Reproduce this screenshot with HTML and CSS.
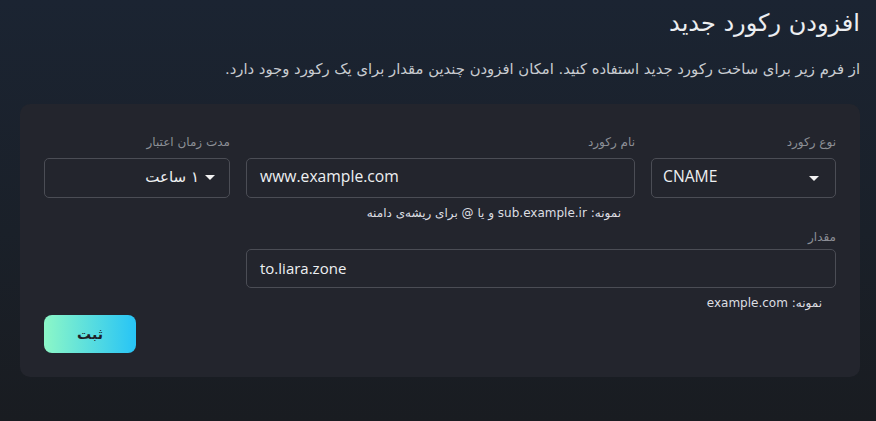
FILE: index.html
```html
<!DOCTYPE html>
<html lang="fa" dir="rtl">
<head>
<meta charset="utf-8">
<link rel="stylesheet" href="styles.css">
</head>
<body>
<div class="page">
  <h1 class="title">افزودن رکورد جدید</h1>
  <p class="subtitle">از فرم زیر برای ساخت رکورد جدید استفاده کنید. امکان افزودن چندین مقدار برای یک رکورد وجود دارد.</p>
  <div class="card">
    <div class="grid">
      <div class="field">
        <div class="label">نوع رکورد</div>
        <div class="box select-ltr" dir="ltr">
          <span class="val">CNAME</span>
          <span class="caret"></span>
        </div>
      </div>
      <div class="field">
        <div class="label">نام رکورد</div>
        <div class="box" dir="ltr"><span class="val">www.example.com</span></div>
        <div class="hint">نمونه: sub.example.ir و یا @ برای ریشه‌ی دامنه</div>
      </div>
      <div class="field">
        <div class="label">مدت زمان اعتبار</div>
        <div class="box select-rtl">
          <span class="caret"></span>
          <span class="val">۱ ساعت</span>
        </div>
      </div>
      <div class="field span2">
        <div class="label label-tight">مقدار</div>
        <div class="box box-value" dir="ltr"><span class="val">to.liara.zone</span></div>
        <div class="hint">نمونه: example.com</div>
      </div>
    </div>
    <div class="actions">
      <button class="submit" type="button">ثبت</button>
    </div>
  </div>
</div>
</body>
</html>
```

FILE: styles.css
```css
html, body {
  margin: 0;
  height: 100%;
}
body {
  background: linear-gradient(180deg, #1b2432 0%, #1a2029 55%, #191c21 100%);
  font-family: "Open Sans", "DejaVu Sans", sans-serif;
  color: #e6e8eb;
}
.page {
  padding: 4px 16px 0 16px;
}
.title {
  margin: 0;
  font-family: "DejaVu Sans", sans-serif;
  font-weight: 400;
  font-size: 24px;
  line-height: 38px;
  color: #eceef1;
}
.subtitle {
  margin: 16px 0 0 0;
  font-family: "DejaVu Sans", sans-serif;
  font-size: 14.8px;
  line-height: 22px;
  color: #c9ccd1;
}
.card {
  margin: 24px 0 0 4px;
  background: #23252d;
  border-radius: 10px;
  padding: 30px 24px 24px 24px;
}
.grid {
  display: grid;
  grid-template-columns: 185px 1fr 186px;
  column-gap: 16px;
  row-gap: 8px;
}
.span2 {
  grid-column: 1 / span 2;
}
.field {
  display: flex;
  flex-direction: column;
}
.label {
  font-family: "DejaVu Sans", sans-serif;
  font-size: 12px;
  line-height: 16px;
  color: #8c8f96;
  margin-bottom: 8px;
}
.label-tight {
  margin-bottom: 4px;
}
.box {
  height: 40px;
  box-sizing: border-box;
  border: 1px solid #4b4d55;
  border-radius: 5px;
  display: flex;
  align-items: center;
  padding: 0 13px 4px 13px;
  font-size: 15.7px;
  color: #eef0f2;
}
.box-value {
  font-size: 15px;
  height: 39px;
  padding-bottom: 2px;
}
.select-ltr {
  justify-content: space-between;
  padding: 0 16px 4px 11px;
}
.select-ltr .caret {
  margin-top: 4px;
}
.select-rtl {
  justify-content: flex-start;
  gap: 6px;
  padding: 0 14px 2px 14px;
  font-size: 15px;
  font-family: "DejaVu Sans", sans-serif;
}
.caret {
  width: 0;
  height: 0;
  border-left: 5px solid transparent;
  border-right: 5px solid transparent;
  border-top: 5px solid #f2f2f2;
}
.hint {
  font-family: "DejaVu Sans", sans-serif;
  font-size: 12px;
  line-height: 16px;
  color: #dcdee2;
  margin-top: 7px;
  padding-right: 14px;
}
.actions {
  display: flex;
  justify-content: flex-end;
  margin-top: 4px;
}
.submit {
  width: 92px;
  height: 38px;
  border: none;
  border-radius: 8px;
  background: linear-gradient(90deg, #8cf7c7 0%, #27c4f6 100%);
  color: #1d2027;
  font-family: "DejaVu Sans", sans-serif;
  font-weight: 700;
  font-size: 14px;
}
```
